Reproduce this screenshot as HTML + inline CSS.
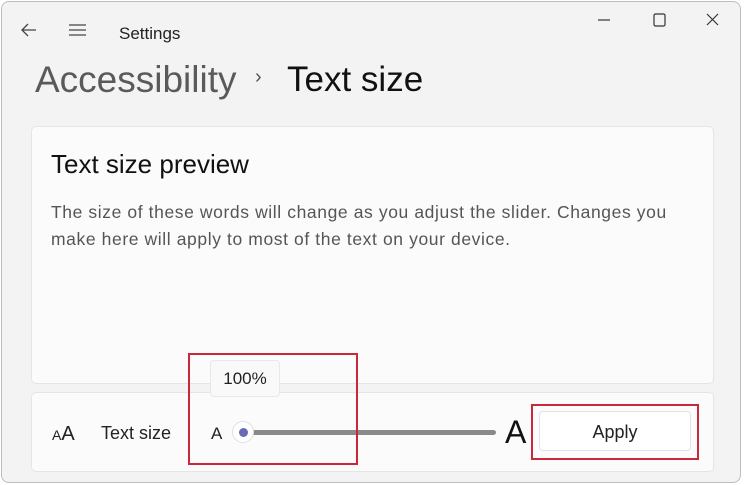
<!DOCTYPE html><html><head><style>
body{margin:0;width:744px;height:485px;background:#fff;font-family:"Liberation Sans",sans-serif;overflow:hidden;position:relative}
.win{position:absolute;left:1px;top:1px;width:740px;height:482px;background:#f3f3f3;border:1px solid #bdbdbd;border-radius:8px;box-sizing:border-box}
.a{position:absolute;white-space:nowrap}
.card{position:absolute;background:#fbfbfb;border:1px solid #e5e5e5;border-radius:5px;box-sizing:border-box}
.red{position:absolute;border:2px solid #c8283a;box-sizing:border-box}
</style></head><body><div class="win"></div>
<svg class="a" style="left:20px;top:22px" width="18" height="16"><path d="M16 8H3M8 2L2 8l6 6" stroke="#444" stroke-width="1.3" fill="none"/></svg>
<svg class="a" style="left:68px;top:23px" width="20" height="14"><path d="M1 2h17M1 7h17M1 12h17" stroke="#444" stroke-width="1.3"/></svg>
<div class="a" style="left:119px;top:24px;font-size:17px;color:#222">Settings</div>
<svg class="a" style="left:595px;top:12px" width="130" height="16"><path d="M3 8h12" stroke="#333" stroke-width="1.2"/><rect x="59" y="2" width="11" height="12" rx="1.5" stroke="#333" stroke-width="1.2" fill="none"/><path d="M112 2l11 11M123 2l-11 11" stroke="#333" stroke-width="1.2"/></svg>
<div class="a" style="left:35px;top:59px;font-size:37px;color:#5a5a5a">Accessibility</div>
<div class="a" style="left:255px;top:66px;font-size:20px;color:#555">›</div>
<div class="a" style="left:287px;top:60px;font-size:35px;color:#111">Text size</div>
<div class="card" style="left:31px;top:126px;width:683px;height:258px"></div>
<div class="a" style="left:51px;top:149px;font-size:26px;color:#111">Text size preview</div>
<div class="a" style="left:51px;top:199px;font-size:17.5px;letter-spacing:0.6px;line-height:27px;color:#555">The size of these words will change as you adjust the slider. Changes you<br>make here will apply to most of the text on your device.</div>
<div class="card" style="left:31px;top:392px;width:683px;height:80px"></div>
<div class="a" style="left:52px;top:423px;font-size:14px;color:#222">A<span style="font-size:20px">A</span></div>
<div class="a" style="left:101px;top:423px;font-size:18px;color:#222">Text size</div>
<div class="a" style="left:211px;top:424px;font-size:17px;color:#222">A</div>
<div class="a" style="left:244px;top:430px;width:252px;height:5px;background:#8a8a8a;border-radius:3px"></div>
<div class="a" style="left:232px;top:421px;width:22px;height:22px;border-radius:50%;background:#fff;border:1px solid #e0e0e0;box-sizing:border-box"></div>
<div class="a" style="left:239px;top:428px;width:9px;height:9px;border-radius:50%;background:#6b6bb5"></div>
<div class="a" style="left:210px;top:360px;width:70px;height:37px;background:#f9f9f9;border:1px solid #e8e8e8;border-radius:4px;box-sizing:border-box;font-size:17px;color:#222;text-align:center;line-height:36px">100%</div>
<div class="a" style="left:505px;top:414px;font-size:32px;color:#111">A</div>
<div class="a" style="left:539px;top:411px;width:152px;height:40px;background:#fff;border:1px solid #e2e2e2;border-radius:4px;box-sizing:border-box;font-size:18px;color:#222;text-align:center;line-height:40px">Apply</div>
<div class="red" style="left:188px;top:353px;width:170px;height:112px"></div>
<div class="red" style="left:531px;top:404px;width:168px;height:56px"></div>
</body></html>
